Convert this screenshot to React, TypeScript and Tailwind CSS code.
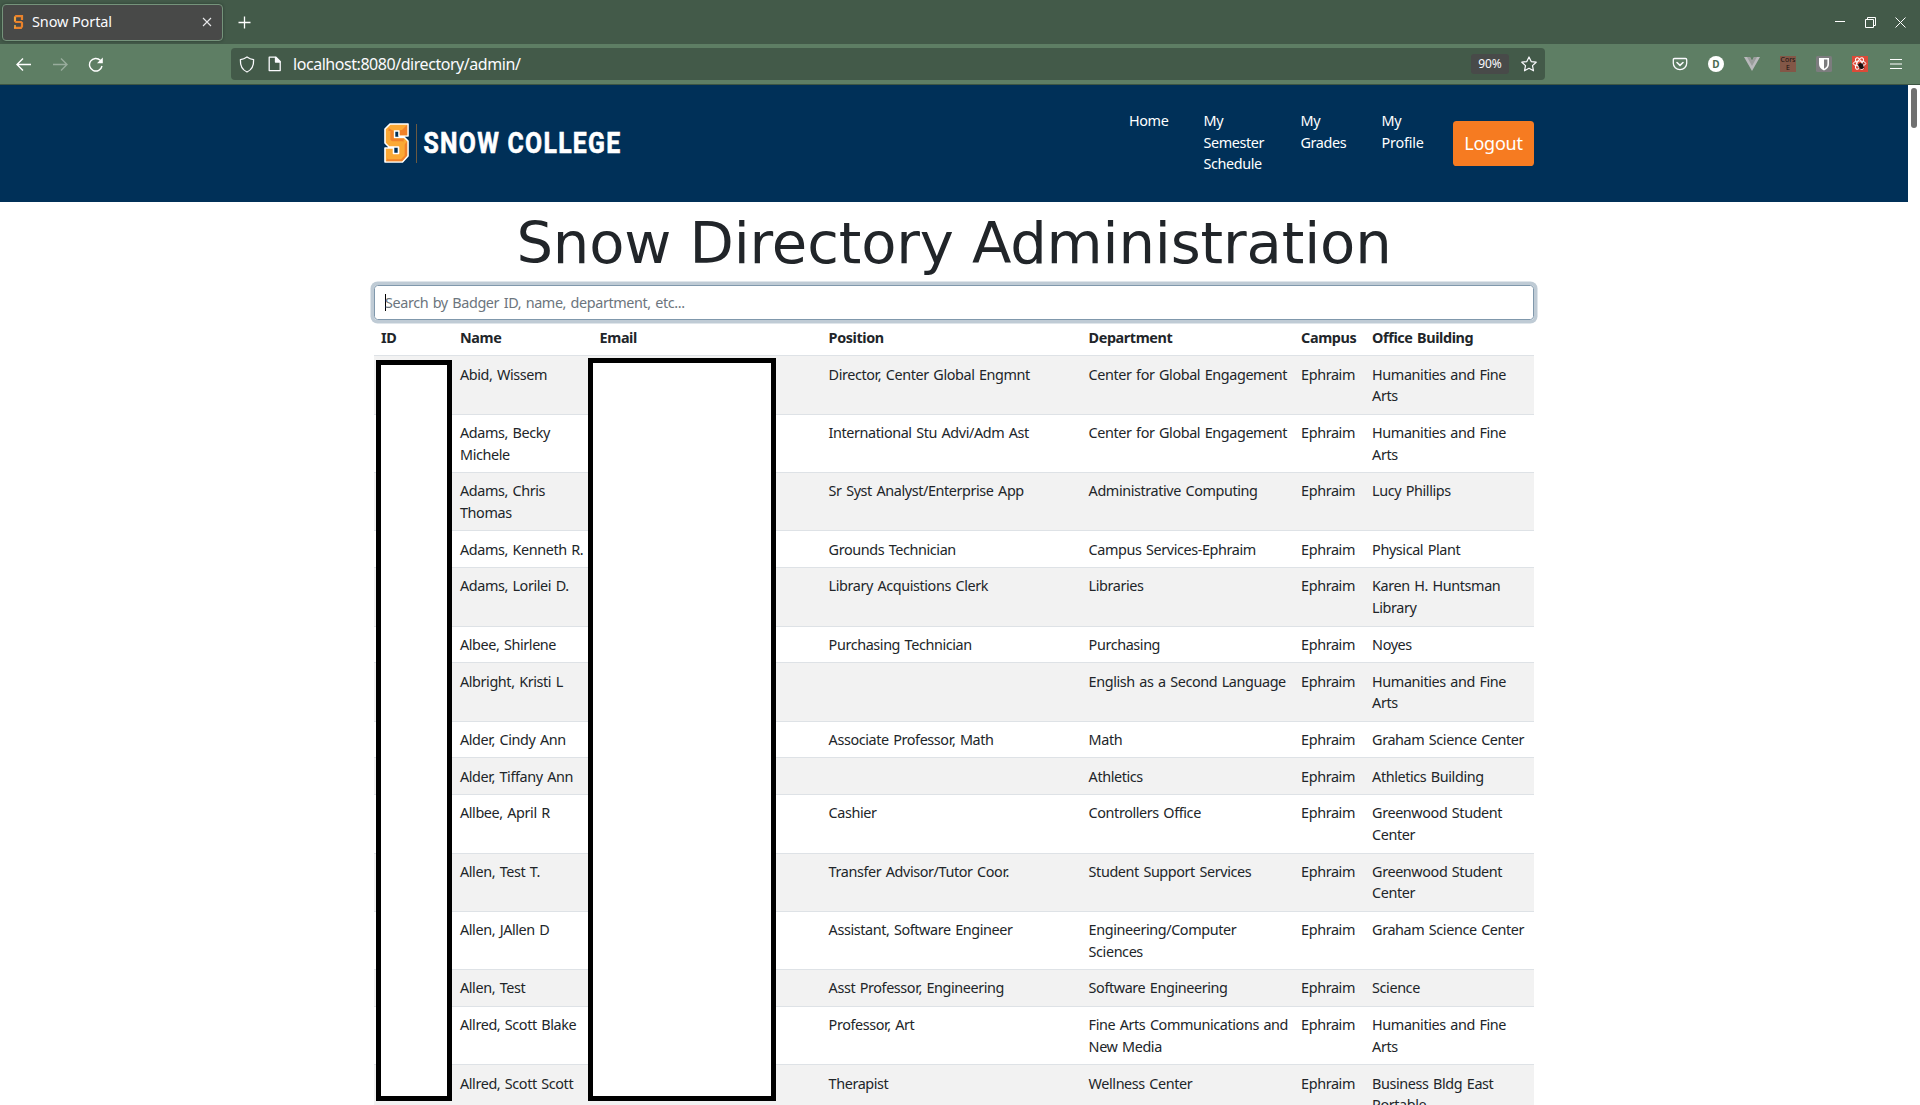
import React from "react";

type Row = { name: string[]; position: string; dept: string[]; office: string[] };

const rows: Row[] = [
  { name: ["Abid, Wissem"], position: "Director, Center Global Engmnt", dept: ["Center for Global Engagement"], office: ["Humanities and Fine", "Arts"] },
  { name: ["Adams, Becky", "Michele"], position: "International Stu Advi/Adm Ast", dept: ["Center for Global Engagement"], office: ["Humanities and Fine", "Arts"] },
  { name: ["Adams, Chris", "Thomas"], position: "Sr Syst Analyst/Enterprise App", dept: ["Administrative Computing"], office: ["Lucy Phillips"] },
  { name: ["Adams, Kenneth R."], position: "Grounds Technician", dept: ["Campus Services-Ephraim"], office: ["Physical Plant"] },
  { name: ["Adams, Lorilei D."], position: "Library Acquistions Clerk", dept: ["Libraries"], office: ["Karen H. Huntsman", "Library"] },
  { name: ["Albee, Shirlene"], position: "Purchasing Technician", dept: ["Purchasing"], office: ["Noyes"] },
  { name: ["Albright, Kristi L"], position: "", dept: ["English as a Second Language"], office: ["Humanities and Fine", "Arts"] },
  { name: ["Alder, Cindy Ann"], position: "Associate Professor, Math", dept: ["Math"], office: ["Graham Science Center"] },
  { name: ["Alder, Tiffany Ann"], position: "", dept: ["Athletics"], office: ["Athletics Building"] },
  { name: ["Allbee, April R"], position: "Cashier", dept: ["Controllers Office"], office: ["Greenwood Student", "Center"] },
  { name: ["Allen, Test T."], position: "Transfer Advisor/Tutor Coor.", dept: ["Student Support Services"], office: ["Greenwood Student", "Center"] },
  { name: ["Allen, JAllen D"], position: "Assistant, Software Engineer", dept: ["Engineering/Computer", "Sciences"], office: ["Graham Science Center"] },
  { name: ["Allen, Test"], position: "Asst Professor, Engineering", dept: ["Software Engineering"], office: ["Science"] },
  { name: ["Allred, Scott Blake"], position: "Professor, Art", dept: ["Fine Arts Communications and", "New Media"], office: ["Humanities and Fine", "Arts"] },
  { name: ["Allred, Scott Scott"], position: "Therapist", dept: ["Wellness Center"], office: ["Business Bldg East", "Portable"] },
];

const GRID = "grid grid-cols-[79px_139.6px_229px_260px_212.5px_71px_1fr]";

function Cell({ lines }: { lines: string[] }) {
  return (
    <div className="whitespace-nowrap pl-[7px] pt-[7.2px]">
      {lines.map((l) => (
        <div key={l}>{l}</div>
      ))}
    </div>
  );
}

function SnowS({ className }: { className: string }) {
  return (
    <svg className={className} viewBox="0 0 25 40" fill="none">
      <path d="M6 1H24V13H15V8H10.5V14.5H20.5L24 18V33L18.5 39H1V25H9.5V30.5H14.5V24H5L1 20V6Z" fill="#fba935" stroke="#fff" strokeWidth="1.6" strokeLinejoin="round" />
      <path d="M15.8 7.2V12.2H23.2V1.8L18 7ZM9.6 15.4V8L4.5 5V17.5L6.5 20H19L20 15.4ZM2 38.2H18L23.2 32.5V18.5L20 22V31L17 35H4Z" fill="#f0812a" />
      <path d="M7 4.5H19M5.2 8V17.5L7.5 19.5H18L19.5 21.5V32L16.5 35H5V27" stroke="#fba935" strokeWidth="2.4" />
    </svg>
  );
}

function TabBar() {
  return (
    <div className="flex h-[44px] items-center bg-[#435a49] text-[#fbfbfe]">
      <div className="ml-[2px] flex h-[37px] w-[221px] items-center rounded-[4px] border border-[#75937b] bg-[#484948] pl-[10px] shadow-[0_0_3px_rgba(0,0,0,0.35)]">
        <svg className="h-[16px] w-[11px]" viewBox="0 0 11 16" fill="none">
          <path d="M9 6V2.2H3L2 3.2V7L3 8H8L9 9V12.5L8 13.8H1" stroke="#e9822b" strokeWidth="2.2" />
          <path d="M2 11V13.8M2 7V3" stroke="#f5b040" strokeWidth="1.4" />
        </svg>
        <span className="ml-[8px] text-[14.5px] tracking-[-0.12px]">Snow Portal</span>
        <svg className="ml-auto mr-[10px] h-[10px] w-[10px]" viewBox="0 0 10 10" stroke="#e8e8ea" strokeWidth="1.1">
          <path d="M1 1L9 9M9 1L1 9" />
        </svg>
      </div>
      <svg className="ml-[15px] mt-px h-[13px] w-[13px]" viewBox="0 0 13 13" stroke="#fff" strokeWidth="1.3">
        <path d="M6.5 0.5V12.5M0.5 6.5H12.5" />
      </svg>
      <div className="ml-auto mr-[14px] flex items-center gap-[19px]">
        <svg className="h-[12px] w-[12px]" viewBox="0 0 12 12" stroke="#fff"><path d="M1 5.5H11" /></svg>
        <svg className="h-[11px] w-[11px]" viewBox="0 0 11 11" fill="none" stroke="#fff"><path d="M0.5 2.5H8.5V10.5H0.5ZM2.5 2.5V0.5H10.5V8.5H8.5" /></svg>
        <svg className="h-[11px] w-[11px]" viewBox="0 0 11 11" stroke="#fff"><path d="M0.5 0.5L10.5 10.5M10.5 0.5L0.5 10.5" /></svg>
      </div>
    </div>
  );
}

function ToolBar() {
  return (
    <div className="flex h-[41px] items-center border-b border-[#3d5543] bg-[#5e7e64] text-[#fbfbfe]">
      <svg className="ml-[16px] h-[16px] w-[16px]" viewBox="0 0 16 16" fill="none" stroke="#fff" strokeWidth="1.4"><path d="M15 8.5H1.5M7 2.5L1 8.5L7 14.5" /></svg>
      <svg className="ml-[20px] h-[16px] w-[16px]" viewBox="0 0 16 16" fill="none" stroke="#98ac9c" strokeWidth="1.4"><path d="M1 8.5H14.5M9 2.5L15 8.5L9 14.5" /></svg>
      <svg className="ml-[20px] h-[16px] w-[16px]" viewBox="0 0 16 16" fill="none" stroke="#fff" strokeWidth="1.4"><path d="M14 10A6.3 6.3 0 1 1 12.3 4.3" /><path d="M14.8 1.5V7.2H9Z" fill="#fff" stroke="none" /></svg>
      <div className="ml-[127px] flex h-[32px] w-[1314px] items-center rounded-[4px] bg-[#435a49]">
        <svg className="ml-[8px] h-[17px] w-[16px]" viewBox="0 0 16 17" fill="none" stroke="#fbfbfe" strokeWidth="1.3" strokeLinejoin="round"><path d="M8 1Q11 3.2 14.6 3.6C14.9 9.5 12.5 14 8 16C3.5 14 1.1 9.5 1.4 3.6Q5 3.2 8 1Z" /></svg>
        <svg className="ml-[13px] h-[16px] w-[13px]" viewBox="0 0 13 16" fill="none" stroke="#fbfbfe" strokeWidth="1.3" strokeLinejoin="round"><path d="M2 1.2H8L12.2 5.4V14.6H1.2V1.2Z" /><path d="M7.5 1.5V6H12Z" fill="#fbfbfe" /></svg>
        <span className="ml-[12px] text-[16px] tracking-[-0.45px]">localhost:8080/directory/admin/</span>
        <span className="ml-auto flex h-[20px] w-[38px] items-center justify-center rounded-[3px] bg-[#484a49] text-[12px]">90%</span>
        <svg className="ml-[12px] mr-[8px] h-[16px] w-[16px]" viewBox="0 0 16 16" fill="none" stroke="#fbfbfe" strokeWidth="1.2" strokeLinejoin="round"><path d="M8 1L10.2 5.6L15.2 6.2L11.5 9.6L12.5 14.8L8 12.3L3.5 14.8L4.5 9.6L0.8 6.2L5.8 5.6Z" /></svg>
      </div>
      <div className="ml-auto mr-[18px] flex items-center gap-[20px]">
        <svg className="h-[16px] w-[16px]" viewBox="0 0 16 16" fill="none" stroke="#fbfbfe" strokeWidth="1.3" strokeLinecap="round"><path d="M2.5 2.5H13.5Q14.7 2.5 14.7 3.7V7.2A6.7 6.4 0 0 1 1.3 7.2V3.7Q1.3 2.5 2.5 2.5Z" /><path d="M5 6.5L8 9.3L11 6.5" strokeWidth="1.6" /></svg>
        <div className="flex h-[16px] w-[16px] items-center justify-center rounded-full bg-white text-[10px] font-bold text-[#4b6a51]">D</div>
        <svg className="h-[16px] w-[16px]" viewBox="0 0 16 16"><path d="M0 1H6L8 5L10 1H16L8 15Z" fill="#b9b9bc" /><path d="M3 1H6L8 5L10 1H13L8 10Z" fill="#9a9d9c" /></svg>
        <div className="flex h-[16px] w-[16px] flex-col items-center justify-center bg-[#835747] text-[7px] leading-[8px] text-[#171310]"><span>Cors</span><span>E</span></div>
        <svg className="h-[16px] w-[16px]" viewBox="0 0 16 16"><rect width="16" height="16" rx="1.5" fill="#7c7c7e" /><path d="M3 2H13V8Q13 12 8 14.5Q3 12 3 8Z" fill="#fff" /><path d="M8 3.6H11.4V8Q11.4 11 8 12.8Z" fill="#7c7c7e" /></svg>
        <svg className="h-[16px] w-[16px]" viewBox="0 0 16 16" fill="none"><rect width="16" height="16" fill="#dc4a38" /><g stroke="#fff" strokeWidth="1"><ellipse cx="7.5" cy="7.5" rx="6.3" ry="2.5" /><ellipse cx="7.5" cy="7.5" rx="6.3" ry="2.5" transform="rotate(60 7.5 7.5)" /><ellipse cx="7.5" cy="7.5" rx="6.3" ry="2.5" transform="rotate(120 7.5 7.5)" /></g><ellipse cx="9" cy="10" rx="2.3" ry="3.2" transform="rotate(-30 9 10)" fill="#1c1010" /><path d="M5.5 8.5L12.5 12M7.5 13L11.5 6.5" stroke="#1c1010" strokeWidth="0.8" /></svg>
        <svg className="ml-[2px] h-[12px] w-[12px]" viewBox="0 0 12 12" stroke="#fff" strokeWidth="1.2"><path d="M0 1.5H12M0 6H12M0 10.5H12" /></svg>
      </div>
    </div>
  );
}

function Wordmark() {
  return (
    <svg className="ml-[6px] h-[40px] w-[200px]" viewBox="0 0 200 40">
      <text x="0.5" y="30.3" textLength="198" lengthAdjust="spacingAndGlyphs" fill="#fff" stroke="#fff" strokeWidth="0.6" className="font-['Roboto',sans-serif] text-[29px] font-bold tracking-[1.5px]">SNOW COLLEGE</text>
    </svg>
  );
}

function SiteHeader() {
  return (
    <header className="flex h-[117px] items-start bg-[#003058] pl-[384px] text-[14.4px] leading-[21.6px] text-white">
      <div className="mt-[38px] flex h-[40px] w-[745px] items-center">
        <SnowS className="h-[40px] w-[25px]" />
        <div className="ml-[7px] h-[39px] w-px bg-[#6b5a42]" />
        <Wordmark />
      </div>
      <nav className="mt-[25px] flex tracking-[-0.4px]">
        <div className="w-[74.5px]">Home</div>
        <div className="w-[97px]">My<br />Semester<br />Schedule</div>
        <div className="w-[81px]">My<br />Grades</div>
        <div className="w-[71.5px] tracking-[-0.2px]">My<br />Profile</div>
      </nav>
      <div className="mt-[36px] flex h-[45px] w-[81px] items-center justify-center rounded-[3.6px] bg-[#f67b21] text-[18px] tracking-[-0.25px]">Logout</div>
    </header>
  );
}

export default function App() {
  return (
    <div className="h-[1105px] w-[1920px] overflow-hidden bg-white font-['Noto_Sans',sans-serif] text-[#212529]">
      <TabBar />
      <ToolBar />
      <div className="flex h-[1020px]">
        <div className="w-[1908px] overflow-hidden">
          <SiteHeader />
          <h1 className="mt-[7px] h-[69px] text-center font-['DejaVu_Sans',sans-serif] text-[57.6px] leading-[69px] tracking-[-0.13px]">Snow Directory Administration</h1>
          <div className="relative ml-[374px] w-[1160px] text-[14.4px] leading-[21.6px] tracking-[-0.4px] [word-spacing:1.2px]">
            <div className="mt-[7px] flex h-[35px] items-center rounded-[3.6px] border border-[#8098ac] pl-[10px] text-[#6c757d] shadow-[0_0_0_3.5px_#bfcbd5]">
              <div className="-mr-px h-[17px] w-px bg-black" />
              Search by Badger ID, name, department, etc...
            </div>
            <div className={`${GRID} h-[35.4px] font-bold`}>
              {["ID", "Name", "Email", "Position", "Department", "Campus", "Office Building"].map((h) => (
                <Cell key={h} lines={[h]} />
              ))}
            </div>
            {rows.map((r, i) => {
              const tall = r.name.length + r.dept.length + r.office.length > 3;
              return (
                <div key={i} className={`${GRID} border-t border-[#dee2e6] ${tall ? "h-[58.36px]" : "h-[36.76px]"} ${i % 2 ? "bg-white" : "bg-[#f2f2f2]"}`}>
                  <Cell lines={[]} />
                  <Cell lines={r.name} />
                  <Cell lines={[]} />
                  <Cell lines={[r.position]} />
                  <Cell lines={r.dept} />
                  <Cell lines={["Ephraim"]} />
                  <Cell lines={r.office} />
                </div>
              );
            })}
            <div className="absolute left-[2px] top-[75px] h-[741px] w-[76px] border-[5px] border-black bg-white" />
            <div className="absolute left-[214px] top-[73px] h-[743px] w-[188px] border-[5px] border-black bg-white" />
          </div>
        </div>
        <div className="w-[12px] bg-white pl-[3px] pt-[3px]">
          <div className="h-[40px] w-[6px] rounded-full bg-[#707070]" />
        </div>
      </div>
    </div>
  );
}
